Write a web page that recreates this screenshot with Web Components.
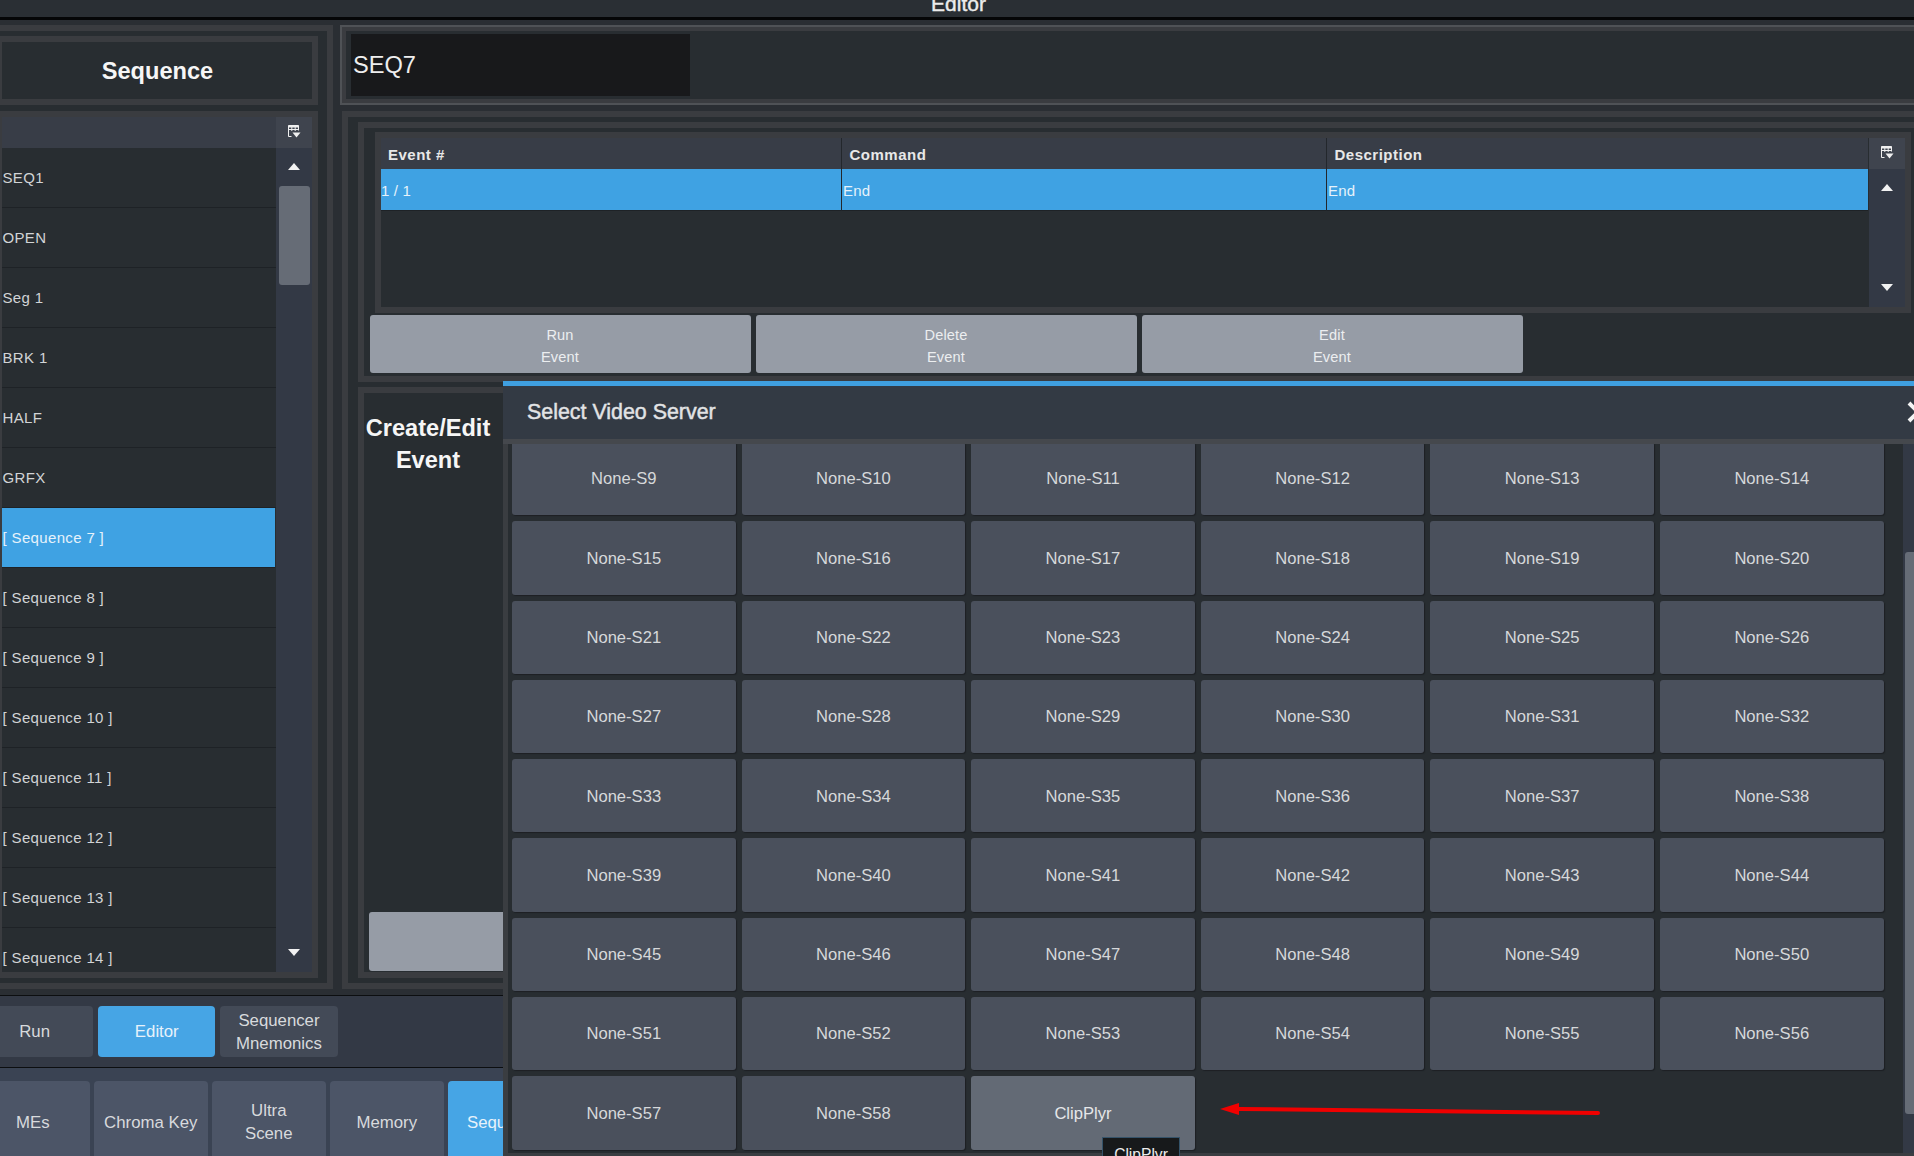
<!DOCTYPE html>
<html>
<head>
<meta charset="utf-8">
<title>Editor</title>
<style>
html, body { margin: 0; padding: 0; background: #282d31; overflow: hidden; }
body { font-family: "Liberation Sans", Arial, sans-serif; color: #d6d8da; }
</style>
</head>
<body>
<app-shell></app-shell>
<script>
const FONT = '"Liberation Sans", Arial, sans-serif'

class TitleBar extends HTMLElement {
    constructor() {
        super()
        this.attachShadow({ mode: "open" })
        this.shadowRoot.innerHTML = `
        <style>
        :host { display: block; height: 17px; border-bottom: 3px solid #050607; background: #2a2f34; overflow: hidden; text-align: center; font: 21px/1 ${FONT}; -webkit-text-stroke: .4px #ececec; color: #ececec; }
        div { margin-top: -7px; padding-left: 3px; }
        </style>
        <div><slot></slot></div>`
    }
}

class FrameBox extends HTMLElement {
    constructor() {
        super()
        this.attachShadow({ mode: "open" })
        this.shadowRoot.innerHTML = `
        <style>
        :host { display: block; box-sizing: border-box; border: 6px solid #3a3c40; background: #282d31; }
        :host([open-left]) { border-left-width: 2px; }
        :host([outer]) { border-left-width: 0; }
        :host([light]) { border: 2px solid #4f5256; box-shadow: inset 0 0 0 4px #3a3c40; }
        </style>
        <slot></slot>`
    }
}

class ScrollRail extends HTMLElement {
    constructor() {
        super()
        this.attachShadow({ mode: "open" })
        this.shadowRoot.innerHTML = `
        <style>
        :host { display: flex; flex-direction: column; width: 36px; background: #333945; flex: none; box-sizing: border-box; }
        .arrow { height: 36px; flex: none; display: flex; align-items: center; justify-content: center; }
        .down { margin-top: auto; padding-bottom: 2px; }
        .thumb { margin: 2px 2px 0 3px; height: 99px; border-radius: 3px; background: #666c76; }
        :host([bare]) .thumb { display: none; }
        svg { display: block; }
        </style>
        <div class="arrow"><svg width="12" height="7"><path d="M6 0 L12 7 H0 Z" fill="#f2f2f2"/></svg></div>
        <div class="thumb"></div>
        <div class="arrow down"><svg width="12" height="7"><path d="M0 0 H12 L6 7 Z" fill="#f2f2f2"/></svg></div>`
    }
}

class CornerButton extends HTMLElement {
    constructor() {
        super()
        this.attachShadow({ mode: "open" })
        this.shadowRoot.innerHTML = `
        <style>
        :host { display: flex; width: 36px; height: 31px; flex: none; align-items: center; justify-content: center; background: #3f444e; }
        svg { display: block; margin-top: -2px; }
        </style>
        <svg width="13" height="13" viewBox="0 0 13 13" fill="none">
            <path d="M.5 7V.5H10.5V5.5" stroke="#f0f0f0"/>
            <path d="M.5 1.5H10.5" stroke="#f0f0f0" stroke-width="2"/>
            <path d="M.5 4.5H10.5M3.8 1V6M7.2 1V6M.5 6V11.5H3.5" stroke="#f0f0f0"/>
            <path d="M4.5 7.5H12.5L8.5 12.5Z" fill="#f0f0f0"/>
        </svg>`
    }
}

class SeqRow extends HTMLElement {
    constructor() {
        super()
        this.attachShadow({ mode: "open" })
        this.shadowRoot.innerHTML = `
        <style>
        :host { display: flex; align-items: center; flex: none; box-sizing: border-box; height: 60px; padding-left: .5px; border-bottom: 1px solid #1e2226; font: 15px/1 ${FONT}; letter-spacing: .35px; color: #d2d4d6; white-space: pre; }
        :host([selected]) { background: #3fa2e3; color: #e6f2fb; border-top: 1px solid #1e2226; margin-top: -1px; height: 61px; margin-right: 1px; }
        </style>
        <slot></slot>`
    }
}

class SeqList extends HTMLElement {
    constructor() {
        super()
        this.attachShadow({ mode: "open" })
        const names = ["SEQ1", "OPEN", "Seg 1", "BRK 1", "HALF", "GRFX", "[ Sequence 7 ]", "[ Sequence 8 ]", "[ Sequence 9 ]", "[ Sequence 10 ]", "[ Sequence 11 ]", "[ Sequence 12 ]", "[ Sequence 13 ]", "[ Sequence 14 ]"]
        const rows = names.map((n, i) => `<seq-row ${i == 6 ? "selected" : ""}>${n}</seq-row>`).join("")
        this.shadowRoot.innerHTML = `
        <style>
        :host { display: grid; grid-template-columns: 274px 36px; grid-template-rows: 31px 824px; }
        .head { background: #383d47; }
        .rows { display: flex; flex-direction: column; overflow: hidden; border-right: 1px solid #1e2226; margin-right: -1px; }
        </style>
        <div class="head"></div><corner-button></corner-button>
        <div class="rows">${rows}</div>
        <scroll-rail></scroll-rail>`
    }
}

class EventTable extends HTMLElement {
    constructor() {
        super()
        this.attachShadow({ mode: "open" })
        this.shadowRoot.innerHTML = `
        <style>
        :host { display: grid; grid-template-columns: 460px 485px 542px 37px; grid-template-rows: 31px 42px 1fr; height: 169px; font-family: ${FONT}; }
        .h { background: #383d47; font: 700 15px/33px ${FONT}; letter-spacing: .5px; color: #e8e8e8; padding-left: 7px; }
        .h + .h { border-left: 1px solid #23272c; padding-left: 7.5px; }
        .c { background: #3fa2e3; border-bottom: 1px solid #1e2226; font: 15px/43px ${FONT}; letter-spacing: .15px; color: #e6f2fb; }
        .c + .c { border-left: 1px solid #23272c; padding-left: 1px; }
        corner-button { margin-left: 1px; }
        scroll-rail { grid-column: 4; grid-row: 2 / 4; margin-left: 1px; }
        </style>
        <div class="h">Event #</div><div class="h">Command</div><div class="h">Description</div><corner-button></corner-button>
        <div class="c">1 / 1</div><div class="c">End</div><div class="c">End</div>
        <scroll-rail bare></scroll-rail>`
    }
}

class GreyButton extends HTMLElement {
    constructor() {
        super()
        this.attachShadow({ mode: "open" })
        this.shadowRoot.innerHTML = `
        <style>
        :host { display: flex; align-items: center; justify-content: center; text-align: center; box-sizing: border-box; width: 381px; height: 58px; padding-top: 3px; padding-right: 1px; border-radius: 3px; background: #969ca6; font: 14.6px/22px ${FONT}; letter-spacing: .15px; color: #eceef0; }
        </style>
        <div><slot></slot></div>`
    }
}

class EditorPanels extends HTMLElement {
    constructor() {
        super()
        this.attachShadow({ mode: "open" })
        this.shadowRoot.innerHTML = `
        <style>
        :host { display: flex; height: 975px; padding-top: 5px; box-sizing: border-box; gap: 7px; padding-bottom: 6px; background: #2a2e33; font-family: ${FONT}; }
        .left { width: 333px; flex: none; padding: 5px 9px 5px 0; display: flex; flex-direction: column; gap: 6px; }
        .seq-title { height: 69px; flex: none; display: flex; align-items: center; justify-content: center; font: 700 23.6px/1 ${FONT}; color: #f6f6f6; padding-top: 2px; padding-left: 1px; }
        .seq-list { flex: 1; min-height: 0; }
        .right { flex: none; width: 1620px; display: flex; flex-direction: column; gap: 6px; }
        .name { height: 80px; padding: 7px 0 7px 9px; }
        .name div { width: 339px; height: 62px; background: #18191b; font: 23.6px/62px ${FONT}; color: #eeeeee; padding-left: 2px; box-sizing: border-box; }
        .lower { flex: 1; margin-left: 2px; padding: 5px 10px; display: flex; flex-direction: column; gap: 5px; }
        .event { height: 260px; padding-left: 6px; flex: none; }
        .tframe { width: 1536px; height: 181px; margin: 4px 0 2px 5px; }
        .btns { display: flex; gap: 5px; }
        .create { flex: 1; display: flex; flex-direction: column; justify-content: space-between; padding-bottom: 1px; }
        .ctitle { width: 128px; text-align: center; font: 700 23.6px/32px ${FONT}; color: #f6f6f6; padding-top: 19px; }
        .cbtn { margin-left: 5px; width: 300px; height: 59px; border-radius: 3px; background: #969ca6; }
        </style>
        <frame-box class="left" outer>
            <frame-box class="seq-title" open-left>Sequence</frame-box>
            <frame-box class="seq-list" open-left><seq-list></seq-list></frame-box>
        </frame-box>
        <div class="right">
            <frame-box class="name" light><div>SEQ7</div></frame-box>
            <frame-box class="lower">
                <frame-box class="event">
                    <frame-box class="tframe"><event-table></event-table></frame-box>
                    <div class="btns">
                        <grey-button>Run<br>Event</grey-button>
                        <grey-button>Delete<br>Event</grey-button>
                        <grey-button>Edit<br>Event</grey-button>
                    </div>
                </frame-box>
                <frame-box class="create">
                    <div class="ctitle">Create/Edit<br>Event</div>
                    <div class="cbtn"></div>
                </frame-box>
            </frame-box>
        </div>`
    }
}

class NavBar extends HTMLElement {
    constructor() {
        super()
        this.attachShadow({ mode: "open" })
        this.shadowRoot.innerHTML = `
        <style>
        :host { display: flex; box-sizing: border-box; background: #333945; height: 73px; padding: 10px 0 0 0; gap: 5px; margin-left: -24px; border-top: 1px solid #0c0e10; border-bottom: 1px solid #0c0e10; }
        :host([tabs]) { background: #3a4353; height: 90px; padding-top: 13px; gap: 4.5px; border: 0; margin-left: -24px; }
        </style>
        <slot></slot>`
    }
}

class NavButton extends HTMLElement {
    constructor() {
        super()
        this.attachShadow({ mode: "open" })
        this.shadowRoot.innerHTML = `
        <style>
        :host { display: flex; align-items: center; justify-content: center; text-align: center; flex: none; box-sizing: border-box; width: 117.2px; height: 51px; border-radius: 4px; background: #434a57; font: 16.8px/23px ${FONT}; color: #d8dadd; }
        :host([tab]) { width: 113.5px; height: 100px; background: #4c5567; padding-bottom: 18px; }
        :host([active]) { background: #46a5e5; color: #e6f2fb; }
        </style>
        <div><slot></slot></div>`
    }
}

class ServerButton extends HTMLElement {
    constructor() {
        super()
        this.attachShadow({ mode: "open" })
        this.shadowRoot.innerHTML = `
        <style>
        :host { display: flex; align-items: center; justify-content: center; padding-top: 2px; box-sizing: border-box; border-radius: 3px; background: #4a505c; font: 16.6px/1 ${FONT}; color: #d6d8da; box-shadow: 1px 1px 1px #1d2024; }
        :host([hover]) { background: #636a75; color: #e6e7e9; }
        </style>
        <slot></slot>`
    }
}

class ToolTip extends HTMLElement {
    constructor() {
        super()
        this.attachShadow({ mode: "open" })
        this.shadowRoot.innerHTML = `
        <style>
        :host { position: absolute; left: 599px; top: 751px; width: 78px; height: 40px; box-sizing: border-box; border: 1px solid #35536a; background: #17191b; color: #ececec; font: 15.6px/34px ${FONT}; text-align: center; }
        </style>
        <slot></slot>`
    }
}

class ServerModal extends HTMLElement {
    constructor() {
        super()
        this.attachShadow({ mode: "open" })
        let btns = ""
        for (let i = 9; i <= 58; i++) btns += `<server-button>None-S${i}</server-button>`
        btns += `<server-button hover>ClipPlyr</server-button>`
        this.shadowRoot.innerHTML = `
        <style>
        :host { position: absolute; left: 503px; top: 381px; right: 0; bottom: 0; display: flex; flex-direction: column; overflow: hidden; background: #282d31; border-top: 5px solid #3f9fe0; font-family: ${FONT}; }
        .head { height: 52px; padding-top: 1px; flex: none; box-sizing: content-box; background: #333a44; border-bottom: 5px solid #45484d; display: flex; align-items: center; padding-left: 24px; font: 21.4px/1 ${FONT}; -webkit-text-stroke: .45px #e2e3e5; color: #e2e3e5; position: relative; }
        .close { position: absolute; left: 1404px; top: 15px; }
        .body { flex: 1; display: flex; min-height: 0; border-left: 5px solid #3a3d41; border-bottom: 3px solid #3a3d41; position: relative; }
        .grid { flex: 1; overflow: hidden; padding-left: 4px; }
        .inner { display: grid; grid-template-columns: repeat(6, 223.6px); grid-auto-rows: 73.3px; gap: 6px; margin-top: -2px; }
        .rail { flex: none; width: 11px; background: #333945; padding: 108px 0 0 2px; box-sizing: border-box; }
        .rail div { height: 562px; background: #666c76; border-radius: 3px 0 0 3px; }
        svg.arrow { position: absolute; left: 0; top: 0; pointer-events: none; }
        </style>
        <div class="head">Select Video Server
            <svg class="close" width="22" height="22" viewBox="0 0 22 22"><path d="M2 2 L20 20 M20 2 L2 20" stroke="#f4f4f4" stroke-width="4"/></svg>
        </div>
        <div class="body">
            <div class="grid"><div class="inner">${btns}</div></div>
            <div class="rail"><div></div></div>
        </div>
        <tool-tip>ClipPlyr</tool-tip>
        <svg class="arrow" width="1411" height="775"><path d="M1095 727 L736 723" stroke="#f00000" stroke-width="4" stroke-linecap="round" fill="none"/><path d="M717 723 L736 717 V729 Z" fill="#f00000"/></svg>`
    }
}

class AppShell extends HTMLElement {
    constructor() {
        super()
        this.attachShadow({ mode: "open" })
        this.shadowRoot.innerHTML = `
        <style>
        :host { display: block; position: relative; width: 1914px; height: 1156px; overflow: hidden; }
        </style>
        <title-bar>Editor</title-bar>
        <editor-panels></editor-panels>
        <nav-bar>
            <nav-button>Run</nav-button>
            <nav-button active>Editor</nav-button>
            <nav-button>Sequencer<br>Mnemonics</nav-button>
        </nav-bar>
        <nav-bar tabs>
            <nav-button tab>MEs</nav-button>
            <nav-button tab>Chroma Key</nav-button>
            <nav-button tab>Ultra<br>Scene</nav-button>
            <nav-button tab>Memory</nav-button>
            <nav-button tab active>Sequence</nav-button>
        </nav-bar>
        <server-modal></server-modal>`
    }
}

customElements.define("title-bar", TitleBar)
customElements.define("frame-box", FrameBox)
customElements.define("scroll-rail", ScrollRail)
customElements.define("corner-button", CornerButton)
customElements.define("seq-row", SeqRow)
customElements.define("seq-list", SeqList)
customElements.define("event-table", EventTable)
customElements.define("grey-button", GreyButton)
customElements.define("editor-panels", EditorPanels)
customElements.define("nav-bar", NavBar)
customElements.define("nav-button", NavButton)
customElements.define("server-button", ServerButton)
customElements.define("tool-tip", ToolTip)
customElements.define("server-modal", ServerModal)
customElements.define("app-shell", AppShell)
</script>
</body>
</html>
